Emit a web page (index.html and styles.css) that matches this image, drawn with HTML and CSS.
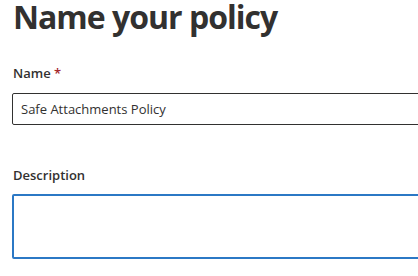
FILE: index.html
```html
<!DOCTYPE html>
<html>
<head>
    <meta charset="UTF-8">
    <title>Name your policy</title>
    <link rel="stylesheet" href="styles.css">
</head>
<body>
<div id="page">
    <h1 class="title">Name your policy</h1>
    <div class="field">
        <label class="label" for="name">Name <span class="req">*</span></label>
        <input class="input" id="name" type="text" value="Safe Attachments Policy">
    </div>
    <div class="field field-desc">
        <label class="label" for="desc">Description</label>
        <textarea class="textarea" id="desc"></textarea>
    </div>
</div>
</body>
</html>
```

FILE: styles.css
```css
html,body{
    margin: 0;
    padding: 0;
    background: #fff;
    overflow: hidden;
}
body{
    width: 418px;
    height: 276px;
}
#page{
    width: 520px;
    padding: 0 0 0 12px;
    font-family: "Open Sans", "Noto Sans", sans-serif;
    color: #323130;
}
.title{
    margin: 0;
    padding: 0 0 0 1px;
    font-size: 32px;
    line-height: 34px;
    font-weight: 700;
    letter-spacing: -1px;
    height: 46px;
}
.field{
    display: flex;
    flex-direction: column;
    padding-top: 19px;
}
.field-desc{
    padding-top: 42px;
}
.label{
    font-size: 13px;
    line-height: 16px;
    font-weight: 600;
    padding-left: 1px;
    margin-bottom: 12px;
}
.field-desc .label{
    margin-bottom: 11px;
}
.req{
    color: #a4262c;
}
.input{
    box-sizing: border-box;
    width: 100%;
    height: 32px;
    margin: 0;
    border: 1px solid #323130;
    border-radius: 2px;
    padding: 0 8px;
    font: 13px "Open Sans", "Noto Sans", sans-serif;
    color: #323130;
    outline: none;
}
.textarea{
    box-sizing: border-box;
    width: 100%;
    height: 65px;
    margin: 0;
    border: 2px solid #2b78c5;
    border-radius: 2px;
    padding: 6px 8px;
    resize: none;
    outline: none;
    font: 13px "Open Sans", "Noto Sans", sans-serif;
}
```
